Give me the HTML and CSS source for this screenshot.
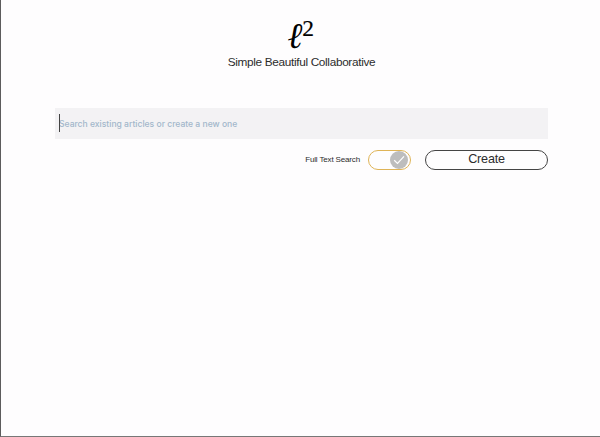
FILE: index.html
```html
<!DOCTYPE html>
<html lang="en">
<head>
<meta charset="utf-8">
<title>Simple Beautiful Collaborative</title>
<link rel="stylesheet" href="styles.css">
</head>
<body>
<main class="page">
  <header class="header">
    <h1 class="logo"><span class="ell">ℓ</span><span class="power">2</span></h1>
    <p class="tagline">Simple Beautiful Collaborative</p>
  </header>
  <div class="field">
    <input class="search" type="text" placeholder="Search existing articles or create a new one">
    <span class="caret"></span>
  </div>
  <div class="actions">
    <span class="label">Full Text Search</span>
    <div class="toggle" role="switch" aria-checked="true">
      <svg class="knob" viewBox="0 0 18 18"><circle cx="9" cy="9" r="9"/><path d="M4.2 9.3 7.5 12.4 14 5.4"/></svg>
    </div>
    <button class="create">Create</button>
  </div>
</main>
</body>
</html>
```
FILE: styles.css
```css
* { box-sizing: border-box; }
body { margin: 0; background: #fefdfe; }
.page {
  height: 437px;
  padding: 18px 52px 0 54px;
  border-left: 1px solid #5c5c5c;
  border-bottom: 1px solid #777;
  font-family: "Liberation Sans", Arial, sans-serif;
  color: #2c2c2c;
  overflow: hidden;
}
.header { text-align: center; }
.logo {
  display: flex;
  justify-content: center;
  margin: 0;
  padding-right: 2px;
  height: 36px;
  font: 400 24px/36px "Liberation Serif", serif;
  color: #000;
}
.ell { font: italic 400 36px/36px "Liberation Serif", serif; }
.power { font-size: 23.5px; line-height: 21px; -webkit-text-stroke: 0.2px #000; }
.tagline { margin: 0; font-size: 11.8px; line-height: 17px; letter-spacing: -0.33px; }
.field { position: relative; height: 31px; margin-top: 37px; }
.search {
  display: block;
  width: 100%;
  height: 31px;
  padding: 0 4px;
  border: 0;
  outline: 0;
  background: #f3f2f4;
  font: 500 8.55px Inter, sans-serif;
}
.search::placeholder { color: #a2b7cb; opacity: 1; }
.caret { position: absolute; left: 3.5px; top: 6px; width: 1px; height: 18px; background: #444; }
.actions {
  display: flex;
  justify-content: flex-end;
  align-items: center;
  height: 20px;
  margin-top: 11px;
}
.label { font-size: 8px; line-height: 10px; letter-spacing: -0.15px; margin: 0 8px 1px 0; }
.toggle {
  display: flex;
  align-items: center;
  justify-content: flex-end;
  width: 43px;
  height: 20px;
  margin-right: 14px;
  padding-right: 2px;
  border: 1px solid #dfb457;
  border-radius: 10px;
}
.knob { width: 18px; height: 18px; fill: #bdbdbd; }
.knob path { fill: none; stroke: #fff; stroke-width: 1.2; }
.create {
  width: 123px;
  height: 20px;
  padding: 0 0 2px;
  border: 1px solid #444;
  border-radius: 10px;
  background: transparent;
  color: #2c2c2c;
  font: 12.6px/16px "Liberation Sans", Arial, sans-serif;
  letter-spacing: -0.2px;
}
```
